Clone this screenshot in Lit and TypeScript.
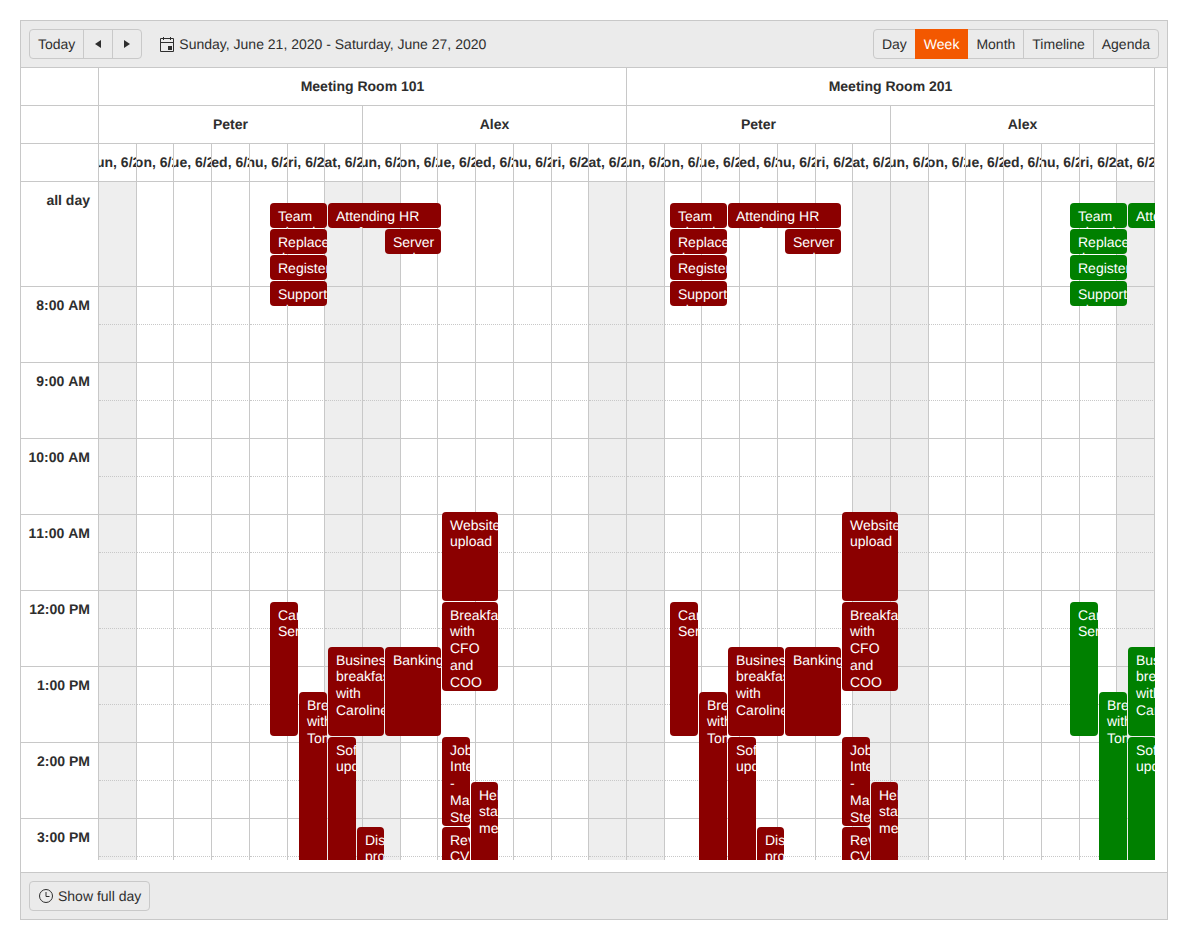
import { LitElement, html, css, svg } from 'lit';
import { customElement } from 'lit/decorators.js';

type Ev = { t: string; x: number; y: number; w: number; h: number };

const DAYS = ['Sun, 6/21', 'Mon, 6/22', 'Tue, 6/23', 'Wed, 6/24', 'Thu, 6/25', 'Fri, 6/26', 'Sat, 6/27'];
const HOURS = ['8:00 AM', '9:00 AM', '10:00 AM', '11:00 AM', '12:00 PM', '1:00 PM', '2:00 PM', '3:00 PM'];

// coordinates are relative to the top left of the scrolling event canvas
const BASE: Ev[] = [
  { t: 'Team planning', x: 171, y: 21, w: 57, h: 25 },
  { t: 'Attending HR conference', x: 229, y: 21, w: 113, h: 25 },
  { t: 'Replace the printer', x: 171, y: 47, w: 57, h: 25 },
  { t: 'Server maintenance', x: 286, y: 47, w: 56, h: 25 },
  { t: 'Register new members', x: 171, y: 73, w: 57, h: 25 },
  { t: 'Support phone', x: 171, y: 99, w: 57, h: 25 },
  { t: 'Website upload', x: 343, y: 330, w: 56, h: 89 },
  { t: 'Car Service', x: 171, y: 420, w: 28, h: 134 },
  { t: 'Breakfast with CFO and COO', x: 343, y: 420, w: 56, h: 89 },
  { t: 'Business breakfast with Caroline', x: 229, y: 465, w: 56, h: 89 },
  { t: 'Banking', x: 286, y: 465, w: 56, h: 89 },
  { t: 'Breakfast with Tom', x: 200, y: 510, w: 28, h: 400 },
  { t: 'Software updates', x: 229, y: 555, w: 28, h: 400 },
  { t: 'Job Interview - Mary Stevens', x: 343, y: 555, w: 28, h: 89 },
  { t: 'Help staff meeting', x: 372, y: 600, w: 27, h: 300 },
  { t: 'Discuss project', x: 258, y: 645, w: 27, h: 300 },
  { t: 'Review CV', x: 343, y: 645, w: 28, h: 300 },
];

const EVENTS = [
  ...BASE.map((e) => ({ ...e, c: 'red' })),
  ...BASE.map((e) => ({ ...e, x: e.x + 400, c: 'red' })),
  ...BASE.map((e) => ({ ...e, x: e.x + 800, c: 'green' })),
];

const triangle = (left: boolean) => html`<svg class="tri" width="8" height="10" viewBox="0 0 8 10">
  ${svg`<path d=${left ? 'M7 1v8L1 5z' : 'M1 1v8l6-4z'} fill="#2e2e2e" />`}
</svg>`;

@customElement('app-root')
export class AppRoot extends LitElement {
  static styles = css`
    :host {
      display: block;
      padding: 20px;
      font-family: 'Liberation Sans', Arial, sans-serif;
      font-size: 14px;
      color: #2e2e2e;
      text-rendering: geometricPrecision;
    }

    .scheduler {
      width: 1148px;
      box-sizing: border-box;
      border: 1px solid #c8c8c8;
    }

    .toolbar,
    .footer {
      display: flex;
      align-items: center;
      background: #ebebeb;
      padding: 8px;
      box-sizing: border-box;
      height: 47px;
    }

    .toolbar {
      border-bottom: 1px solid #c8c8c8;
    }

    .footer {
      border-top: 1px solid #c8c8c8;
      margin-top: 12px;
    }

    .group {
      display: flex;
      height: 30px;
      box-sizing: border-box;
      border: 1px solid #c9c9c9;
      border-radius: 4px;
    }

    .group .btn {
      display: flex;
      align-items: center;
      justify-content: center;
      padding: 0 8px;
      border-left: 1px solid #c9c9c9;
    }

    .group .btn:first-child {
      border-left: none;
    }

    .group .icon-btn {
      width: 29px;
      padding: 0;
      box-sizing: border-box;
    }

    .group .active {
      background: #f35800;
      color: #fff;
      border-left: none;
      margin: -1px 0;
      padding: 0 9px;
    }

    .group .active + .btn {
      border-left: none;
    }

    .range {
      display: flex;
      align-items: center;
      gap: 5px;
      margin-left: 18px;
      flex: 1;
    }

    .footer .btn {
      display: flex;
      align-items: center;
      gap: 5px;
      padding: 0 8px 0 9px;
    }

    .table {
      width: 1134px;
    }

    .row {
      display: grid;
      grid-template-columns: 78px repeat(28, 1fr);
    }

    .row > div {
      box-sizing: border-box;
      border-right: 1px solid #c8c8c8;
      border-bottom: 1px solid #c8c8c8;
    }

    .head > div {
      height: 38px;
      padding-bottom: 1px;
      font-weight: 700;
      display: flex;
      align-items: center;
      justify-content: center;
      overflow: hidden;
      white-space: nowrap;
    }

    .room {
      grid-column: span 14;
    }

    .person {
      grid-column: span 7;
    }

    .body {
      position: relative;
      height: 678px;
      overflow: hidden;
    }

    .allday > div {
      height: 105px;
    }

    .hour > div {
      height: 38px;
    }

    .hour.half > div {
      border-bottom-style: dotted;
    }

    .row .weekend {
      background: #eeeeee;
    }

    .row > .label {
      text-align: right;
      font-weight: 700;
      font-kerning: none;
      padding: 10px 8px 0 0;
      white-space: nowrap;
      line-height: 16px;
    }

    .row.half > .label {
      border-bottom: none;
    }

    .canvas {
      position: absolute;
      left: 78px;
      top: 0;
      width: 1056px;
      height: 678px;
      overflow: hidden;
    }

    .event {
      position: absolute;
      box-sizing: border-box;
      padding: 4.6px 8px 4px;
      border-radius: 4px;
      color: #fff;
      line-height: 16.8px;
      overflow: hidden;
    }

    .event.red {
      background: #8b0000;
    }

    .event.green {
      background: #008000;
    }
  `;

  private cells() {
    return Array.from({ length: 28 }, (_, i) => html`<div class=${i % 7 === 0 || i % 7 === 6 ? 'weekend' : ''}></div>`);
  }

  render() {
    const persons = ['Peter', 'Alex', 'Peter', 'Alex'];
    return html`
      <div class="scheduler">
        <div class="toolbar">
          <div class="group">
            <div class="btn">Today</div>
            <div class="btn icon-btn">${triangle(true)}</div>
            <div class="btn icon-btn">${triangle(false)}</div>
          </div>
          <div class="range">
            <svg width="14" height="15" viewBox="0 0 14 15" fill="none" stroke="#2e2e2e">
              <path d="M.5 1.5h13v13H.5z" />
              <path d="M.5 5.5h13" />
              <path d="M3.5 0v3M10.5 0v3" />
              <path d="M8 9h4v4H8z" fill="#2e2e2e" stroke="none" />
            </svg>
            <span>Sunday, June 21, 2020 - Saturday, June 27, 2020</span>
          </div>
          <div class="group">
            <div class="btn">Day</div>
            <div class="btn active">Week</div>
            <div class="btn">Month</div>
            <div class="btn">Timeline</div>
            <div class="btn">Agenda</div>
          </div>
        </div>

        <div class="table">
          <div class="row head">
            <div></div>
            <div class="room">Meeting Room 101</div>
            <div class="room">Meeting Room 201</div>
          </div>
          <div class="row head">
            <div></div>
            ${persons.map((p) => html`<div class="person">${p}</div>`)}
          </div>
          <div class="row head">
            <div></div>
            ${persons.flatMap(() => DAYS).map((d) => html`<div>${d}</div>`)}
          </div>
          <div class="body">
            <div class="row allday">
              <div class="label">all day</div>
              ${this.cells()}
            </div>
            ${HOURS.map(
              (h) => html`
                <div class="row hour half">
                  <div class="label">${h}</div>
                  ${this.cells()}
                </div>
                <div class="row hour">
                  <div></div>
                  ${this.cells()}
                </div>
              `,
            )}
            <div class="canvas">
              ${EVENTS.map(
                (e) => html`<div
                  class="event ${e.c}"
                  style="left:${e.x}px;top:${e.y}px;width:${e.w}px;height:${e.h}px"
                >
                  ${e.t}
                </div>`,
              )}
            </div>
          </div>
        </div>

        <div class="footer">
          <div class="group">
            <div class="btn">
              <svg width="14" height="14" viewBox="0 0 14 14" fill="none" stroke="#2e2e2e">
                <circle cx="7" cy="7" r="6.5" />
                <path d="M7 3v4.5h3.5" />
              </svg>
              Show full day
            </div>
          </div>
        </div>
      </div>
    `;
  }
}
